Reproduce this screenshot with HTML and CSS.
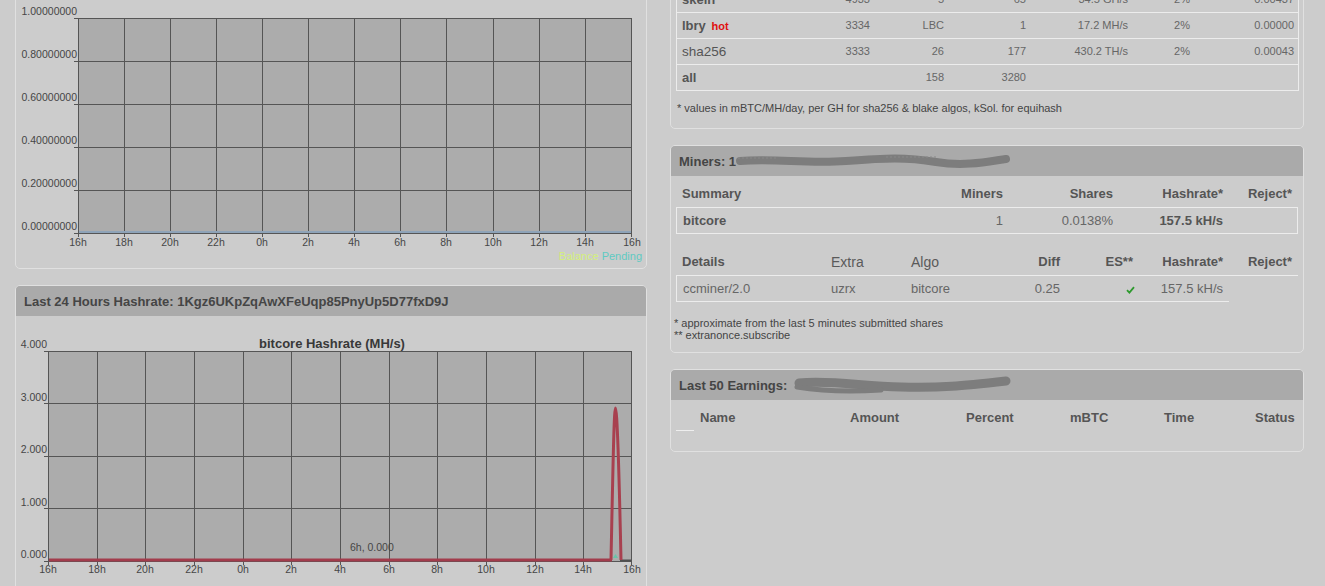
FILE: index.html
```html
<!DOCTYPE html>
<html>
<head>
<meta charset="utf-8">
<title>Wallet</title>
<link rel="stylesheet" href="styles.css">
</head>
<body>
<div class="page">
  <div class="col col-left">
    <div class="panel">
      <div class="panel-head">Last 24 Hours Balance: 1Kgz6UKpZqAwXFeUqp85PnyUp5D77fxD9J</div>
      <div class="panel-body">
        <svg class="chart" width="630" height="310" viewBox="0 0 630 310">
          <rect x="62" y="60" width="554" height="215" fill="#acacac"/>
          <g stroke="#555" stroke-width="1" fill="none">
            <path d="M62.5 60V279M108.5 60V279M154.5 60V279M200.5 60V279M246.5 60V279M292.5 60V279M338.5 60V279M384.5 60V279M430.5 60V279M477.5 60V279M523.5 60V279M569.5 60V279M615.5 60V279"/>
            <path d="M58 60.5H616M58 103.5H616M58 146.5H616M58 189.5H616M58 232.5H616M58 275.5H616"/>
          </g>
          <path d="M63 274H615" stroke="#8ea3b8" stroke-width="2"/>
          <g class="axis" text-anchor="end">
            <text x="61" y="57">1.00000000</text>
            <text x="61" y="100">0.80000000</text>
            <text x="61" y="143">0.60000000</text>
            <text x="61" y="186">0.40000000</text>
            <text x="61" y="229">0.20000000</text>
            <text x="61" y="272">0.00000000</text>
          </g>
          <g class="axis" text-anchor="middle">
            <text x="62" y="288">16h</text>
            <text x="108" y="288">18h</text>
            <text x="154" y="288">20h</text>
            <text x="200" y="288">22h</text>
            <text x="246" y="288">0h</text>
            <text x="292" y="288">2h</text>
            <text x="338" y="288">4h</text>
            <text x="384" y="288">6h</text>
            <text x="430" y="288">8h</text>
            <text x="477" y="288">10h</text>
            <text x="523" y="288">12h</text>
            <text x="569" y="288">14h</text>
            <text x="616" y="288">16h</text>
          </g>
          <text class="legend" x="626" y="302" text-anchor="end"><tspan fill="#d4f07a">Balance</tspan> <tspan fill="#5fcac2">Pending</tspan></text>
        </svg>
      </div>
    </div>

    <div class="panel">
      <div class="panel-head">Last 24 Hours Hashrate: 1Kgz6UKpZqAwXFeUqp85PnyUp5D77fxD9J</div>
      <div class="panel-body">
        <svg class="chart" width="630" height="280" viewBox="0 0 630 280">
          <text class="chart-title" x="316" y="32" text-anchor="middle">bitcore Hashrate (MH/s)</text>
          <rect x="32" y="35" width="584" height="210" fill="#acacac"/>
          <g stroke="#555" stroke-width="1" fill="none">
            <path d="M32.5 35V249M81.5 35V249M129.5 35V249M178.5 35V249M227.5 35V249M275.5 35V249M324.5 35V249M373.5 35V249M421.5 35V249M470.5 35V249M519.5 35V249M567.5 35V249M615.5 35V249"/>
            <path d="M28 35.5H616M28 87.5H616M28 140.5H616M28 192.5H616M28 245.5H616"/>
          </g>
          <path d="M33 244H596" stroke="#a23c4c" stroke-width="3"/>
          <path d="M604 244.5H615" stroke="#4e4e4e" stroke-width="2"/>
          <path d="M595 244C597 150 598 92 599.5 92C601 92 603 150 605 244" stroke="#a8404f" stroke-width="3" fill="none"/>
          <path d="M597 242L599.5 238L602 242Z" fill="#68c4a8"/>
          <text class="axis" x="334" y="235">6h, 0.000</text>
          <g class="axis" text-anchor="end">
            <text x="31" y="32">4.000</text>
            <text x="31" y="85">3.000</text>
            <text x="31" y="137">2.000</text>
            <text x="31" y="190">1.000</text>
            <text x="31" y="242">0.000</text>
          </g>
          <g class="axis" text-anchor="middle">
            <text x="32" y="257">16h</text>
            <text x="81" y="257">18h</text>
            <text x="129" y="257">20h</text>
            <text x="178" y="257">22h</text>
            <text x="227" y="257">0h</text>
            <text x="275" y="257">2h</text>
            <text x="324" y="257">4h</text>
            <text x="373" y="257">6h</text>
            <text x="421" y="257">8h</text>
            <text x="470" y="257">10h</text>
            <text x="519" y="257">12h</text>
            <text x="567" y="257">14h</text>
            <text x="616" y="257">16h</text>
          </g>
        </svg>
      </div>
    </div>
  </div>

  <div class="col col-right">
    <div class="panel">
      <div class="panel-head">Pool Status</div>
      <div class="panel-body">
        <table class="grid algos">
          <colgroup>
            <col class="w124"><col class="w73"><col class="w74"><col class="w82"><col class="w102"><col class="w62"><col class="w104">
          </colgroup>
          <thead>
            <tr><th class="l">Algo</th><th>Port</th><th>Coins</th><th>Miners</th><th>Hashrate</th><th>Fees</th><th>Estimate*</th></tr>
          </thead>
          <tbody>
            <tr><td class="name">skein</td><td>4933</td><td>5</td><td>65</td><td>34.5 GH/s</td><td>2%</td><td>0.00437</td></tr>
            <tr><td class="name">lbry <span class="hot">hot</span></td><td>3334</td><td>LBC</td><td>1</td><td>17.2 MH/s</td><td>2%</td><td>0.00000</td></tr>
            <tr><td class="name light">sha256</td><td>3333</td><td>26</td><td>177</td><td>430.2 TH/s</td><td>2%</td><td>0.00043</td></tr>
            <tr><td class="name">all</td><td></td><td>158</td><td>3280</td><td></td><td></td><td></td></tr>
          </tbody>
        </table>
        <p class="note note-algos">* values in mBTC/MH/day, per GH for sha256 &amp; blake algos, kSol. for equihash</p>
      </div>
    </div>

    <div class="panel">
      <div class="panel-head">Miners: 1<svg class="redact" width="276" height="24" viewBox="0 0 276 24"><path d="M4 12C40 9 70 15 110 12S170 8 200 13S255 12 270 10" stroke="#7d7d7d" stroke-width="8" stroke-linecap="round" fill="none"/><path d="M2 9H40M150 8H200" stroke="#8a8a8a" stroke-width="1" stroke-dasharray="2 2"/></svg></div>
      <div class="panel-body">
        <table class="grid summary">
          <colgroup>
            <col class="w233"><col class="w100"><col class="w110"><col class="w110"><col class="w69">
          </colgroup>
          <thead>
            <tr><th class="l">Summary</th><th>Miners</th><th>Shares</th><th>Hashrate*</th><th>Reject*</th></tr>
          </thead>
          <tbody>
            <tr class="boxed"><td class="l b">bitcore</td><td>1</td><td>0.0138%</td><td class="b">157.5 kH/s</td><td></td></tr>
          </tbody>
        </table>
        <table class="grid details">
          <colgroup>
            <col class="w149"><col class="w80"><col class="w95"><col class="w66"><col class="w73"><col class="w90"><col class="w69">
          </colgroup>
          <thead>
            <tr><th class="l">Details</th><th class="l norm">Extra</th><th class="l norm">Algo</th><th>Diff</th><th>ES**</th><th>Hashrate*</th><th>Reject*</th></tr>
          </thead>
          <tbody>
            <tr><td class="l first">ccminer/2.0</td><td class="l">uzrx</td><td class="l">bitcore</td><td>0.25</td><td><svg class="check" width="9" height="8" viewBox="0 0 9 8"><path d="M1 4.2L3.4 6.6L8 1.2" stroke="#2e9a2e" stroke-width="1.8" fill="none"/></svg></td><td>157.5 kH/s</td></tr>
          </tbody>
        </table>
        <p class="note note-miners">* approximate from the last 5 minutes submitted shares<br>** extranonce.subscribe</p>
      </div>
    </div>

    <div class="panel">
      <div class="panel-head">Last 50 Earnings:<svg class="redact redact-earn" width="222" height="24" viewBox="0 0 222 24"><path d="M8 10C40 7 70 13 110 14S170 13 215 8" stroke="#7d7d7d" stroke-width="9" stroke-linecap="round" fill="none"/><path d="M6 14C30 18 60 19 90 17" stroke="#7d7d7d" stroke-width="5" stroke-linecap="round" fill="none"/></svg></div>
      <div class="panel-body panel-earn">
        <table class="grid earnings">
          <colgroup>
            <col class="w18"><col class="w150"><col class="w116"><col class="w104"><col class="w94"><col class="w91"><col class="w49">
          </colgroup>
          <thead>
            <tr><th class="stub"></th><th class="l">Name</th><th class="l">Amount</th><th class="l">Percent</th><th class="l">mBTC</th><th class="l">Time</th><th class="l">Status</th></tr>
          </thead>
        </table>
      </div>
    </div>
  </div>
</div>
</body>
</html>
```

FILE: styles.css
```css
* { box-sizing: border-box; }
html, body { margin: 0; padding: 0; }
body {
  background: #cccccc;
  font-family: "Liberation Sans", Arial, sans-serif;
  color: #555;
  overflow: hidden;
}
.page {
  display: flex;
  align-items: flex-start;
  gap: 23px;
  padding-left: 15px;
  margin-top: -73px;
}
.col { display: flex; flex-direction: column; gap: 16px; }
.col-left { width: 632px; }
.col-right { width: 634px; }

.panel {
  border: 1px solid #e0e0e0;
  border-radius: 5px;
  background: #cccccc;
  overflow: hidden;
}
.panel-head {
  height: 30px;
  background: #aaaaaa;
  padding-left: 8px;
  display: flex;
  align-items: center;
  font-size: 13px;
  font-weight: bold;
  color: #454545;
  white-space: nowrap;
}
.panel-body { display: flow-root; }
.chart { display: block; }
.axis { font-family: "Liberation Sans", Arial, sans-serif; font-size: 10.5px; fill: #464646; }
.legend { font-family: "Liberation Sans", Arial, sans-serif; font-size: 11px; }
.chart-title { font-family: "Liberation Sans", Arial, sans-serif; font-size: 13px; font-weight: bold; fill: #383838; }

.redact { display: block; margin-left: 0; }
.redact-earn { margin-left: 4px; }

.grid {
  border-collapse: separate;
  border-spacing: 0;
  table-layout: fixed;
  margin-left: 5px;
  width: 622px;
}
.grid th, .grid td {
  padding: 0 6px;
  text-align: right;
  white-space: nowrap;
  overflow: visible;
}
.grid th { font-size: 13px; font-weight: bold; color: #555; line-height: 26px; }
.grid th.norm { font-weight: normal; font-size: 14px; color: #5a5a5a; }
.grid .l { text-align: left; }
.grid .b { font-weight: bold; color: #555; }

/* algos table */
.algos {
  margin-top: 2px;
  width: 623px;
  border-top: 1px solid #ececec;
  border-left: 1px solid #ececec;
  border-right: 1px solid #ececec;
}
.algos th, .algos td {
  padding: 0 4px;
  line-height: 25px;
  border-bottom: 1px solid #ececec;
}
.algos td { font-size: 11px; color: #666; }
.algos td.name { text-align: left; padding-left: 5px; font-size: 13px; font-weight: bold; color: #555; }
.algos td.light { font-weight: normal; font-size: 13.5px; }
.hot { color: #e01010; font-size: 11px; font-weight: bold; line-height: 1; margin-left: 2px; }

/* miners */
.summary { margin-top: 5px; }
.summary td, .details td { font-size: 13px; color: #666; line-height: 25px; }
.summary .boxed td { border-top: 1px solid #ececec; border-bottom: 1px solid #ececec; }
.summary .boxed td:first-child { border-left: 1px solid #ececec; }
.summary .boxed td:last-child { border-right: 1px solid #ececec; }
.summary td.b { color: #555; }

.details { margin-top: 15px; }
.details th { border-bottom: 1px solid #ececec; }
.details td { border-bottom: 1px solid #ececec; }
.details td.first { border-left: 1px solid #ececec; }
.check { display: inline-block; vertical-align: middle; margin-right: -2px; }

.note { margin: 0; font-size: 11px; color: #444; }
.note-algos { margin-top: 10px; line-height: 14px; padding: 0 0 13px 6px; }
.note-miners { margin-top: 15px; line-height: 12px; padding: 0 0 11px 3px; }

/* earnings */
.earnings { margin-top: 5px; }
.panel-earn { padding-bottom: 20px; }
.earnings th.stub { border-bottom: 1px solid #eeeeee; padding: 0; }

.w18 { width: 18px; } .w49 { width: 49px; } .w62 { width: 62px; } .w66 { width: 66px; }
.w69 { width: 69px; } .w73 { width: 73px; } .w74 { width: 74px; } .w80 { width: 80px; }
.w82 { width: 82px; } .w90 { width: 90px; } .w91 { width: 91px; } .w94 { width: 94px; }
.w95 { width: 95px; } .w100 { width: 100px; } .w102 { width: 102px; } .w104 { width: 104px; }
.w110 { width: 110px; } .w116 { width: 116px; } .w124 { width: 124px; } .w149 { width: 149px; }
.w150 { width: 150px; } .w233 { width: 233px; }
```
